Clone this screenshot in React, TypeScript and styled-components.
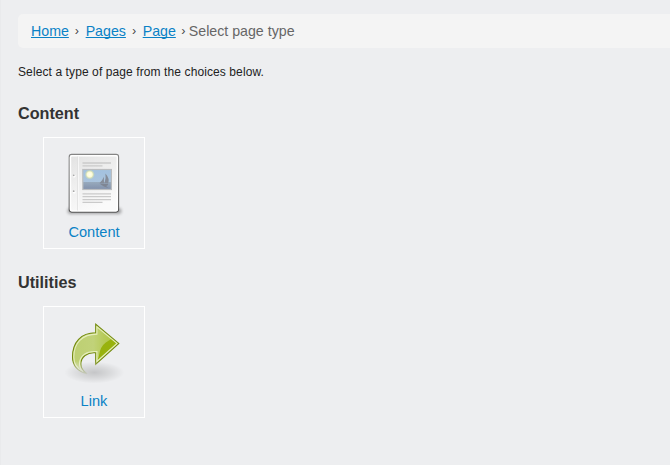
import React from 'react';
import styled, { createGlobalStyle } from 'styled-components';

const GlobalStyle = createGlobalStyle`
  * { box-sizing: border-box; }
  body {
    margin: 0;
    background: #edeef0;
    color: #333;
    font-family: "Liberation Sans", Arial, sans-serif;
    overflow: hidden;
  }
`;

const Page = styled.main`
  height: 465px;
  padding: 14px 0 0 17px;
  border-left: 1px solid #e9eaec;
`;

const Breadcrumb = styled.nav`
  display: flex;
  align-items: center;
  height: 34px;
  padding: 0 13px;
  border-radius: 5px 0 0 5px;
  background: #f4f4f4;
  color: #666;
  font-size: 14.2px;
  white-space: pre;
`;

const Crumb = styled.a`
  color: #0a82c6;
  text-decoration: underline;
  text-underline-offset: 1px;
  text-decoration-thickness: 1px;
  text-decoration-skip-ink: none;
`;

const Separator = styled.span<{ $last?: boolean }>`
  width: ${({ $last }) => ($last ? 13 : 16.8)}px;
  padding-left: ${({ $last }) => ($last ? 5.5 : 6)}px;
  color: #444;
  font-size: 12.5px;
`;

const Intro = styled.p`
  margin: 16px 0 0;
  color: #222;
  font-size: 12px;
  line-height: 16px;
  letter-spacing: 0.1px;
`;

const Section = styled.section`
  margin-top: 23px;
`;

const Heading = styled.h2`
  margin: 0;
  color: #333;
  font-size: 16.2px;
  line-height: 20px;
`;

const Tile = styled.a`
  display: flex;
  flex-direction: column;
  align-items: center;
  width: 102px;
  height: 112px;
  margin: 14px 0 0 25px;
  padding-top: 10px;
  border: 1px solid #fff;
  color: #0a82c6;
  font-size: 14.6px;
  line-height: 20px;
  text-decoration: none;
`;

const Icon = styled.svg`
  display: block;
  width: 68px;
  height: 74px;
  flex: none;
`;

const ContentIcon = () => (
  <Icon viewBox="0 0 68 74">
    <defs>
      <linearGradient id="edge" x2="0" y2="1">
        <stop stopColor="#858585" />
        <stop offset="1" stopColor="#585858" />
      </linearGradient>
      <linearGradient id="paper" x2=".4" y2="1">
        <stop stopColor="#e2e2e2" />
        <stop offset=".5" stopColor="#efefef" />
        <stop offset="1" stopColor="#fafafa" />
      </linearGradient>
      <linearGradient id="sky" x2="0" y2="1">
        <stop stopColor="#a3c1e0" />
        <stop offset="1" stopColor="#aec6dc" />
      </linearGradient>
      <linearGradient id="sea" x2="0" y2="1">
        <stop stopColor="#98aabd" />
        <stop offset="1" stopColor="#8190ab" />
      </linearGradient>
      <radialGradient id="sun">
        <stop stopColor="#fffff4" />
        <stop offset=".5" stopColor="#fdfcd4" />
        <stop offset=".7" stopColor="#dce4b0" stopOpacity=".8" />
        <stop offset="1" stopColor="#bfd3c0" stopOpacity="0" />
      </radialGradient>
      <filter id="pageShadow" x="-20%" y="-100%" width="140%" height="300%">
        <feGaussianBlur stdDeviation="1.5" />
      </filter>
    </defs>
    <rect x="7.5" y="60" width="54" height="6" rx="3" fill="#000" opacity=".3" filter="url(#pageShadow)" />
    <rect x="9.2" y="6.4" width="49.4" height="57.7" rx="2.5" fill="url(#paper)" stroke="url(#edge)" strokeWidth="1.1" />
    <rect x="10.5" y="7.7" width="46.8" height="55.1" rx="1.5" fill="none" stroke="#fff" strokeWidth="1.4" />
    <path d="M17.5 8.5v54" stroke="#dfdfdf" strokeWidth=".8" />
    <path d="M18.5 8.5v54" stroke="#fafafa" strokeWidth=".8" />
    <g fill="#fff">
      <circle cx="14.2" cy="28" r="1.5" />
      <circle cx="14.2" cy="43.9" r="1.5" />
    </g>
    <g fill="#a8a8a8">
      <circle cx="13.7" cy="27.3" r=".9" />
      <circle cx="13.7" cy="43.2" r=".9" />
    </g>
    <path
      d="M22.5 15H51M22.5 17.8H42.5M22.5 45.8H51M22.5 48.7H51M22.5 51.6H51M22.5 54.4H42.5"
      stroke="#cacaca"
      strokeWidth="1.3"
    />
    <rect x="22.8" y="21.5" width="28.6" height="20" fill="url(#sky)" />
    <rect x="23" y="34" width="28.2" height="7.5" fill="url(#sea)" />
    <circle cx="29.7" cy="26.5" r="5.2" fill="url(#sun)" />
    <path d="M45.4 25.5q4.6 5 2.7 10l-3.6-.6q1.8-4.4.9-9.4zM43.8 28.8l.2 6.4-4.4-.3q3.2-2.6 4.2-6.1z" fill="#858c99" />
    <path d="M39.3 35.5l9 .4q-.8 1.8-2.2 2.2l2.2 1.8-4.4-1.4z" fill="#7e8593" />
    <rect x="22.8" y="21.5" width="28.6" height="20" fill="none" stroke="#bbbdbf" strokeWidth="1.2" />
  </Icon>
);

const arrow =
  'M35.7 7.2L58.8 26.4L35.7 47.2V35.8C27 35 20.9 40 20.9 47C20.9 51 23 54 27 57C17 54 12.5 47.5 12.5 40C12.5 25 21 15.8 35.7 15.8Z';
const arrowInner =
  'M36.9 9.8L57 26.4L36.9 44.5V34.6C27 33.6 19.5 38.5 19.5 47C19.5 50.5 21 53 23 54.5C16.5 51.5 13.8 46 13.8 40C13.8 26 22 17.1 36.9 17.1Z';

const LinkIcon = () => (
  <Icon viewBox="0 0 68 74">
    <defs>
      <linearGradient id="arrowFade" x2="0" y2="1">
        <stop offset=".76" stopColor="#fff" />
        <stop offset="1" stopColor="#fff" stopOpacity="0" />
      </linearGradient>
      <linearGradient id="leaf" x2="1" y2="0">
        <stop stopColor="#bdcf72" />
        <stop offset=".45" stopColor="#c1d279" />
        <stop offset="1" stopColor="#a9c02e" />
      </linearGradient>
      <radialGradient id="ground">
        <stop stopOpacity=".17" />
        <stop offset=".5" stopOpacity=".09" />
        <stop offset="1" stopOpacity="0" />
      </radialGradient>
      <mask id="arrowMask">
        <rect width="68" height="58" fill="url(#arrowFade)" />
      </mask>
      <clipPath id="arrowClip">
        <path d={arrowInner} />
      </clipPath>
    </defs>
    <ellipse cx="34.3" cy="55.5" rx="30" ry="11" fill="url(#ground)" />
    <g mask="url(#arrowMask)">
      <path d={arrow} fill="url(#leaf)" stroke="#748a10" strokeWidth="1.1" />
      <g clipPath="url(#arrowClip)">
        <path d="M36.5 46Q39 40 40 34Q42 27 49 23.5L54 20L62 26L38 50Z" fill="#98b20d" />
      </g>
      <path d={arrowInner} fill="none" stroke="#e6eebd" strokeWidth="1.1" />
    </g>
  </Icon>
);

const groups = [
  { title: 'Content', label: 'Content', Art: ContentIcon },
  { title: 'Utilities', label: 'Link', Art: LinkIcon },
];

export default function App() {
  return (
    <>
      <GlobalStyle />
      <Page>
        <Breadcrumb>
          <Crumb>Home</Crumb>
          <Separator>›</Separator>
          <Crumb>Pages</Crumb>
          <Separator>›</Separator>
          <Crumb>Page</Crumb>
          <Separator $last>›</Separator>
          <span>Select page type</span>
        </Breadcrumb>
        <Intro>Select a type of page from the choices below.</Intro>
        {groups.map(({ title, label, Art }) => (
          <Section key={title}>
            <Heading>{title}</Heading>
            <Tile>
              <Art />
              <span>{label}</span>
            </Tile>
          </Section>
        ))}
      </Page>
    </>
  );
}
